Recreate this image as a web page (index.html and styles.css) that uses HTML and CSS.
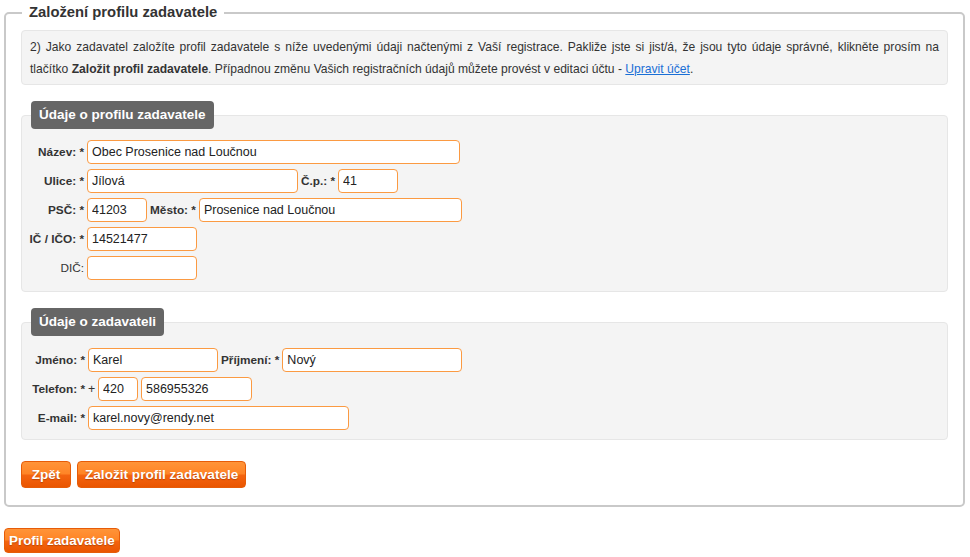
FILE: index.html
```html
<!DOCTYPE html>
<html lang="cs">
<head>
<meta charset="utf-8">
<title>Založení profilu zadavatele</title>
<link rel="stylesheet" href="styles.css">
</head>
<body>
<div class="page">
  <fieldset class="box">
    <legend class="box-title">Založení profilu zadavatele</legend>
    <div class="info">
      <p class="info-text"><span class="info-line">2) Jako zadavatel založíte profil zadavatele s níže uvedenými údaji načtenými z Vaší registrace. Pakliže jste si jist/á, že jsou tyto údaje správné, klikněte prosím na</span> tlačítko <b>Založit profil zadavatele</b>. Případnou změnu Vašich registračních údajů můžete provést v editaci účtu - <a href="#" class="link">Upravit účet</a>.</p>
    </div>

    <div class="panel">
      <div class="panel-tab">Údaje o profilu zadavatele</div>
      <div class="rows">
        <div class="row">
          <label class="lbl">Název: *</label>
          <input class="field w-373" type="text" value="Obec Prosenice nad Loučnou">
        </div>
        <div class="row">
          <label class="lbl">Ulice: *</label>
          <input class="field w-211" type="text" value="Jílová">
          <label class="lbl-inline">Č.p.: *</label>
          <input class="field w-60" type="text" value="41">
        </div>
        <div class="row">
          <label class="lbl">PSČ: *</label>
          <input class="field w-60" type="text" value="41203">
          <label class="lbl-inline">Město: *</label>
          <input class="field w-263" type="text" value="Prosenice nad Loučnou">
        </div>
        <div class="row">
          <label class="lbl">IČ / IČO: *</label>
          <input class="field w-110" type="text" value="14521477">
        </div>
        <div class="row">
          <label class="lbl lbl-normal">DIČ:</label>
          <input class="field w-110" type="text" value="">
        </div>
      </div>
    </div>

    <div class="panel">
      <div class="panel-tab">Údaje o zadavateli</div>
      <div class="rows rows-wide">
        <div class="row">
          <label class="lbl">Jméno: *</label>
          <input class="field w-130" type="text" value="Karel">
          <label class="lbl-inline">Příjmení: *</label>
          <input class="field w-180" type="text" value="Nový">
        </div>
        <div class="row">
          <label class="lbl">Telefon: *</label>
          <span class="plus">+</span>
          <input class="field w-40" type="text" value="420">
          <input class="field w-111" type="text" value="586955326">
        </div>
        <div class="row">
          <label class="lbl">E-mail: *</label>
          <input class="field w-261" type="text" value="karel.novy@rendy.net">
        </div>
      </div>
    </div>

    <div class="actions">
      <button class="btn btn-back" type="button">Zpět</button>
      <button class="btn" type="button">Založit profil zadavatele</button>
    </div>
  </fieldset>

  <button class="btn btn-bottom" type="button">Profil zadavatele</button>
</div>
</body>
</html>
```

FILE: styles.css
```css
html, body {
  margin: 0;
  padding: 0;
  background: #fff;
}

body {
  font-family: "Liberation Sans", Arial, sans-serif;
  font-size: 12px;
  color: #333;
}

.page {
  padding: 4px 5px 0 4px;
}

.box {
  margin: 0;
  border: 2px solid #c9c9c9;
  border-radius: 5px;
  padding: 9px 15px 17px 15px;
  min-width: 0;
}

.box-title {
  padding: 0 7px;
  margin-left: 1px;
  font-size: 14.8px;
  font-weight: bold;
  color: #333;
  line-height: 17px;
}

.info {
  background: #f4f4f4;
  border: 1px solid #e6e6e6;
  border-radius: 4px;
  padding: 5px 8px 4px 8px;
}

.info-text {
  margin: 0;
  font-size: 12.1px;
  line-height: 22px;
  text-align: justify;
  color: #333;
}

.info-line {
  display: block;
  text-align: justify;
  text-align-last: justify;
}

.info-text b {
  color: #333;
}

.link {
  color: #1a6fd6;
  text-decoration: underline;
}

.panel {
  margin-top: 30px;
  background: #f4f4f4;
  border: 1px solid #e6e6e6;
  border-radius: 4px;
}

.panel-tab {
  display: inline-block;
  margin: -15px 0 0 9px;
  height: 28px;
  line-height: 28px;
  padding: 0 8px;
  background: #666;
  color: #fff;
  font-weight: bold;
  font-size: 13.5px;
  border-radius: 4px;
  vertical-align: top;
}

.rows {
  display: flex;
  flex-direction: column;
  gap: 5px;
  padding: 10px 0 11px 0;
}

.rows-wide {
  padding: 11px 0 9px 0;
}

.row {
  display: flex;
  align-items: center;
  gap: 3px;
}

.lbl {
  width: 62px;
  flex: none;
  text-align: right;
  font-weight: bold;
  font-size: 11.8px;
  color: #333;
  white-space: nowrap;
}

.rows-wide .lbl {
  width: 63px;
}

.lbl-normal {
  font-weight: normal;
}

.lbl-inline {
  font-weight: bold;
  font-size: 11.8px;
  color: #333;
  white-space: nowrap;
}

.plus {
  font-size: 12.4px;
  width: 7px;
  color: #333;
}

.field {
  box-sizing: border-box;
  height: 24px;
  margin: 0;
  padding: 0 4px;
  border: 1px solid #fb9a42;
  border-radius: 4px;
  background: #fff;
  font-family: "Liberation Sans", Arial, sans-serif;
  font-size: 12.5px;
  color: #222;
  outline: none;
}

.w-40 { width: 40px; }
.w-60 { width: 60px; }
.w-110 { width: 110px; }
.w-111 { width: 111px; }
.w-130 { width: 130px; }
.w-180 { width: 180px; }
.w-211 { width: 211px; }
.w-261 { width: 261px; }
.w-263 { width: 263px; }
.w-373 { width: 373px; }

.actions {
  display: flex;
  gap: 6px;
  margin-top: 21px;
}

.btn {
  height: 27px;
  margin: 0;
  padding: 0 7px;
  border: 1px solid #e65c08;
  border-radius: 4px;
  background: linear-gradient(to bottom, #ff9438 0%, #ff8426 48%, #f46410 52%, #ea5500 100%);
  color: #fff;
  font-family: "Liberation Sans", Arial, sans-serif;
  font-weight: bold;
  font-size: 13.6px;
  text-shadow: 0 1px 1px rgba(120, 40, 0, 0.45);
  cursor: pointer;
}

.btn-back {
  min-width: 50px;
}

.btn-bottom {
  margin-top: 21px;
  height: 25px;
  padding: 0 4px;
  font-size: 13.4px;
}
```
